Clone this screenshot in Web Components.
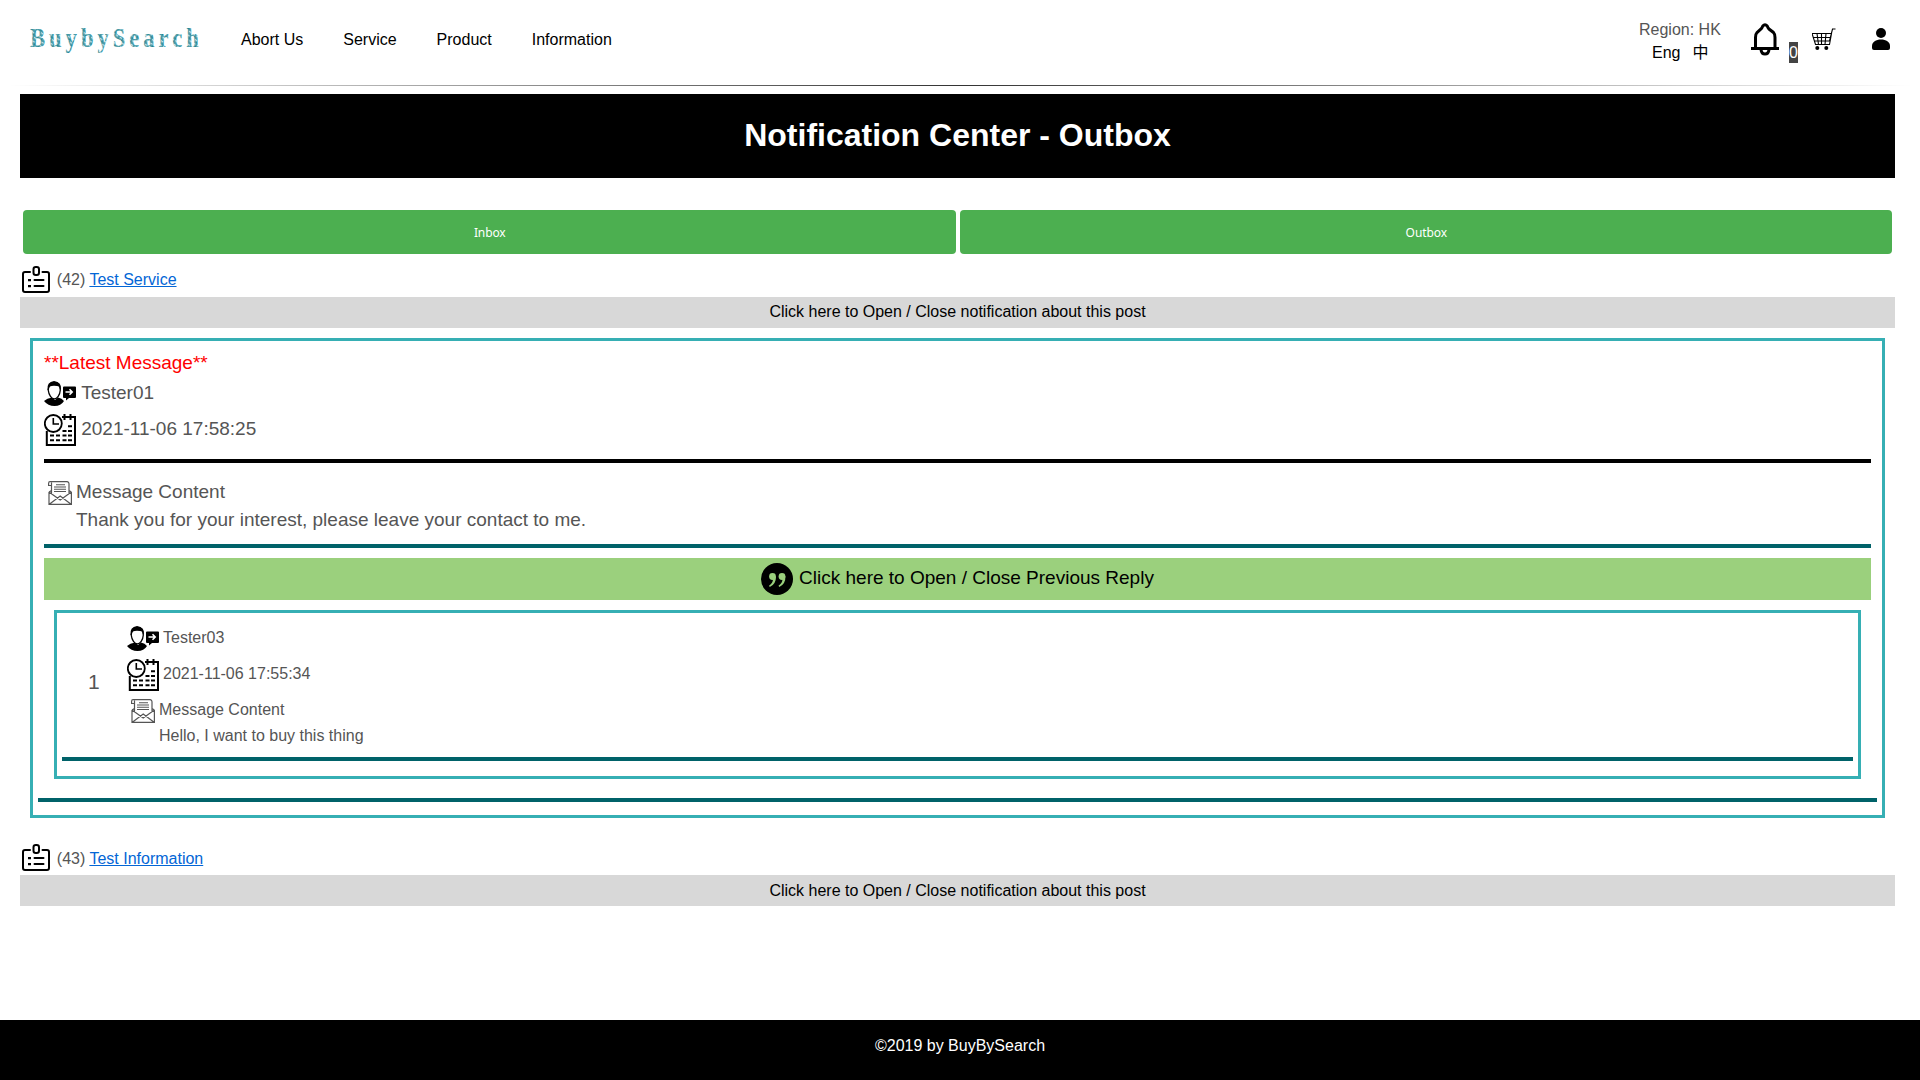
<!DOCTYPE html>
<html lang="en">
<head>
<meta charset="utf-8">
<title>Notification Center - Outbox</title>
<style>
html,body{margin:0;padding:0;background:#fff}
body{font:16px/20px "Liberation Sans","Noto Sans CJK SC",sans-serif;color:#555}
</style>
</head>
<body>
<bs-page>
  <bs-header slot="header"></bs-header>
  <bs-banner>Notification Center - Outbox</bs-banner>
  <bs-tabs></bs-tabs>
  <bs-post number="42" name="Test Service">
    <bs-thread>
      <span slot="flag">**Latest Message**</span>
      <span slot="user">Tester01</span>
      <span slot="date">2021-11-06 17:58:25</span>
      <span slot="text">Thank you for your interest, please leave your contact to me.</span>
      <bs-reply index="1">
        <span slot="user">Tester03</span>
        <span slot="date">2021-11-06 17:55:34</span>
        <span slot="text">Hello, I want to buy this thing</span>
      </bs-reply>
    </bs-thread>
  </bs-post>
  <bs-post number="43" name="Test Information" style="--bar-line:31px;--head-top:5px"></bs-post>
  <bs-footer slot="footer">©2019 by BuyBySearch</bs-footer>
</bs-page>
<script>
const define = (name, html) => customElements.define(name, class extends HTMLElement {
  constructor() {
    super();
    this.attachShadow({ mode: "open" });
  }
  connectedCallback() {
    this.shadowRoot.innerHTML = typeof html === "function" ? html(this) : html;
  }
});

const icons = {
  bell: [28, 33, `<g fill="none" stroke="#000" stroke-width="3"><path d="M4.500 25V14.500Q4.500 11 6 9.500L10 6Q11 5 11.800 3Q14 0.500 16.200 3Q17 5 18 6L22.500 9.500Q24 11 24 14.500V25M0 25.500H28M10 26.500Q10.500 31 14 31T18 26.500"/></g>`],
  cart: [24, 23, `<g fill="none" stroke="#000" stroke-width="1.100"><path d="M0 5.500H19.500L17.500 16.500H3.500ZM1 9.500H18.500M2 13H18M5 5.500L6.500 16.500M9.500 5.500V16.500M14 5.500L13 16.500M23.500 1H20.500L17.500 13"/></g><circle cx="5.300" cy="20" r="2"/><circle cx="14.300" cy="20" r="2"/>`],
  person: [18, 22, `<circle cx="9" cy="5" r="5"/><path d="M0 20V18C0 14 4 11.500 9 11.500S18 14 18 18V20Q18 22 16 22H2Q0 22 0 20Z"/>`],
  post: [28, 27, `<g fill="none" stroke="#000" stroke-width="2" stroke-linecap="round"><path d="M8 6H3Q1 6 1 8V24Q1 26 3 26H25Q27 26 27 24V8Q27 6 25 6H20.500M12.500 14H21.500M12.500 20H21.500"/><rect x="11.500" y="1" width="5.500" height="8" rx="2.300"/></g><path d="M6 13h3v2.200h-3zM6 19h3v2.200h-3z"/>`],
  sender: [32, 25, `<path d="M0 20Q3 17 8 16.500L11 19L14 16.500Q18 17 20 20Q17 25 10.500 25T0 20Z"/><path d="M4.200 9C4.500 3.500 7 1.500 10.500 1.500S16 4 16.300 9C16 14 13 17.800 10.300 17.800S4.800 14 4.200 9Z" fill="#fff" stroke="#000" stroke-width="1.300"/><path d="M3.500 9Q2.500 1 10 0Q18 1 17 9L16 8Q16 5 13 5Q8 4.500 6 5.500Q5 6 4.500 9Z"/><path d="M20 5.500H31Q32 5.500 32 6.500V16Q32 17 31 17H25L22 19.500V17H20Q19 17 19 16V6.500Q19 5.500 20 5.500Z"/><path d="M21.500 11H28M25.500 8.300L28.200 11L25.500 13.700" fill="none" stroke="#fff" stroke-width="1.600"/>`],
  date: [32, 32, `<path d="M2.800 17V31H31V3H18" fill="none" stroke="#000" stroke-width="2"/><path d="M20.500 0V6M26.500 0V6" stroke="#000" stroke-width="2"/><circle cx="9.300" cy="9.500" r="8.500" fill="#fff" stroke="#000" stroke-width="1.800"/><path d="M9.300 4V10H15" fill="none" stroke="#000" stroke-width="1.600"/><path d="M24 12.300h4M18.500 17h4M24 17h4M6 21.500h4M12 21.500h4M18.500 21.500h4M24 21.500h4M6 26.300h4M12 26.300h4M18.500 26.300h4M24 26.300h4" stroke="#000" stroke-width="2"/>`],
  mail: [24, 24, `<g fill="none" stroke="#555" stroke-width="1.200"><path d="M1 11V23.400H23.400V11M1 23.400L12.200 15L23.400 23.400M1 11L12.200 19L23.400 11M3.500 13V1.500M21 13V3Q21 0.700 19 0.700H2Q0.600 0.700 0.600 2.500V4.500H3.500M1 11L3.500 9.500M23.400 11L21 9.500"/><path d="M8 3.700H17M6 6H18M6 8.200H18M6 10.500H18" stroke-width="1.100"/></g>`],
  quote: [32, 32, `<circle cx="16" cy="16" r="16"/><g fill="#9bd07d"><circle cx="11.500" cy="13.500" r="3.400"/><path d="M14.900 13Q15.300 21 8.800 24L8 22.800Q12 20 12 16Z"/><circle cx="21" cy="13.500" r="3.400"/><path d="M24.400 13Q24.800 21 18.300 24L17.500 22.800Q21.500 20 21.500 16Z"/></g>`]
};

define("bs-icon", el => {
  const [w, h, body] = icons[el.getAttribute("name")];
  return `<style>:host{display:block;flex:none;width:${w}px;height:${h}px}svg{display:block}</style>
  <svg width="${w}" height="${h}" viewBox="0 0 ${w} ${h}">${body}</svg>`;
});

define("bs-page", `<style>
  :host{display:flex;flex-direction:column;height:1080px;overflow:hidden}
  main{flex:1;padding:8px 25px 0 20px}
</style><slot name="header"></slot><main><slot></slot></main><slot name="footer"></slot>`);

define("bs-logo", `<style>:host{display:block;width:168px;height:34px}svg{display:block;overflow:visible}
  text{font:bold 27px "Liberation Serif",serif}</style>
  <svg width="168" height="34" viewBox="0 0 168 34">
    <defs><pattern id="etch" width="5" height="4" patternUnits="userSpaceOnUse" patternTransform="rotate(28)">
      <rect width="5" height="4" fill="#4a9ba7"/><rect width="3" height="1.300" fill="#c2dfe3"/><rect x="3" y="2" width="1.500" height="1" fill="#1d7c8b"/></pattern></defs>
    <text x="0" y="22" transform="scale(.84 1)" textLength="201" lengthAdjust="spacing" fill="url(#etch)">BuybySearch</text>
  </svg>`);

define("bs-header", `<style>
  :host{display:block;height:86px;color:#000}
  .row{display:flex;height:85px}
  bs-logo{margin:25px 43px 0 30px}
  nav{display:flex;gap:40px;padding-top:30px}
  .lang{margin-left:auto;width:82px;padding-top:18px;line-height:23px;white-space:nowrap}
  .region{color:#555}
  .pick{display:flex;gap:12px;padding-left:13px}
  .bell{margin:23px 0 0 30px}
  .count{width:9px;height:21px;line-height:21px;margin:42px 14px 0 10px;background:#444;color:#fff}
  .cart{margin-top:28px}
  .user{margin:28px 30px 0 36px}
  hr{margin:0 8px;border:0;height:1px;background:linear-gradient(90deg,transparent,#333,transparent)}
</style>
<div class="row"><bs-logo></bs-logo>
<nav><span>Abort Us</span><span>Service</span><span>Product</span><span>Information</span></nav>
<div class="lang"><div class="region">Region: HK</div><div class="pick"><span>Eng</span><span>中</span></div></div>
<bs-icon class="bell" name="bell"></bs-icon><span class="count">0</span>
<bs-icon class="cart" name="cart"></bs-icon><bs-icon class="user" name="person"></bs-icon></div><hr>`);

define("bs-banner", `<style>:host{display:block;height:84px;background:#000;color:#fff;font-weight:bold;font-size:32px;line-height:82px;text-align:center}</style><slot></slot>`);

define("bs-tabs", `<style>
  :host{display:flex;gap:4px;padding:32px 3px 12px}
  button{flex:1;height:44px;padding:1px 0 0 1px;border:0;border-radius:4px;background:#4caf50;color:#fff;font:12px/43px "Noto Sans",sans-serif;letter-spacing:-0.100px}
</style><button>Inbox</button><button>Outbox</button>`);

define("bs-post", el => `<style>
  :host{display:block}
  .head{display:flex;height:31px;line-height:20px}
  .head bs-icon{margin-left:2px}
  .head p{margin:var(--head-top,4px) 0 0 6.800px}
  a{color:#0366d6;text-decoration:underline}
  .bar{height:31px;line-height:var(--bar-line,29px);background:#d8d8d8;color:#000;text-align:center}
  .rest{padding-bottom:26px}
</style>
<div class="head"><bs-icon name="post"></bs-icon><p>(${el.getAttribute("number")}) <a>${el.getAttribute("name")}</a></p></div>
<div class="bar">Click here to Open / Close notification about this post</div>
<div class="rest"><slot></slot></div>`);

define("bs-thread", `<style>
  :host{display:block;box-sizing:border-box;height:480px;margin:10px 10px 0;border:3px solid #36afb4;padding:0 5px;font-size:19px;line-height:24px}
  .in{padding:0 6px 0 6px}
  .flag{color:red;padding-top:10px;height:30px}
  .line{display:flex}
  .user{height:33px}.user p{margin:0 0 0 5.200px}
  .date{height:45px}.date p{margin:3px 0 0 5.200px}
  p{margin:0}
  .rule{height:4px}
  .msg{display:flex;height:63px;padding:18px 0 0 4px}
  .msg div{padding-left:4px;line-height:28px;margin-top:-3px}
  .bar{display:flex;justify-content:center;height:42px;margin:10px 0;background:#9bd07d;color:#000}
  .bar bs-icon{margin:5px 6px 0 0}
  .bar p{padding-top:8px}
</style>
<div class="in">
<div class="flag"><slot name="flag"></slot></div>
<div class="line user"><bs-icon name="sender"></bs-icon><p><slot name="user"></slot></p></div>
<div class="line date"><bs-icon name="date"></bs-icon><p><slot name="date"></slot></p></div>
<div class="rule" style="background:#000"></div>
<div class="msg"><bs-icon name="mail"></bs-icon><div>Message Content<br><slot name="text"></slot></div></div>
<div class="rule" style="background:#006269"></div>
<div class="bar"><bs-icon name="quote"></bs-icon><p>Click here to Open / Close Previous Reply</p></div>
</div>
<slot></slot>
<div class="rule" style="background:#006269;margin-top:19px"></div>`);

define("bs-reply", el => `<style>
  :host{display:block;box-sizing:border-box;height:169px;margin:0 16px;border:3px solid #36afb4;padding:0 5px;font-size:16px;line-height:20px}
  .row{display:flex;height:144px}
  .num{width:65px;padding:57px 0 0 26px;box-sizing:border-box;font-size:21px;line-height:24px}
  .line{display:flex}
  p{margin:0 0 0 4px}
  .user{padding-top:13px;height:33px}.user p{padding-top:2px}
  .date{height:40px}.date p{padding-top:5px}
  .msg{padding-left:4px}
  .msg p{margin:-2px 0 0 4px;line-height:26px}
  .rule{height:4px;background:#006269}
</style>
<div class="row"><div class="num">${el.getAttribute("index")}</div><div>
<div class="line user"><bs-icon name="sender"></bs-icon><p><slot name="user"></slot></p></div>
<div class="line date"><bs-icon name="date"></bs-icon><p><slot name="date"></slot></p></div>
<div class="line msg"><bs-icon name="mail"></bs-icon><p>Message Content<br><slot name="text"></slot></p></div>
</div></div><div class="rule"></div>`);

define("bs-footer", `<style>:host{display:block;height:60px;background:#000;color:#fff;text-align:center;line-height:51px}</style><slot></slot>`);
</script>
</body>
</html>
